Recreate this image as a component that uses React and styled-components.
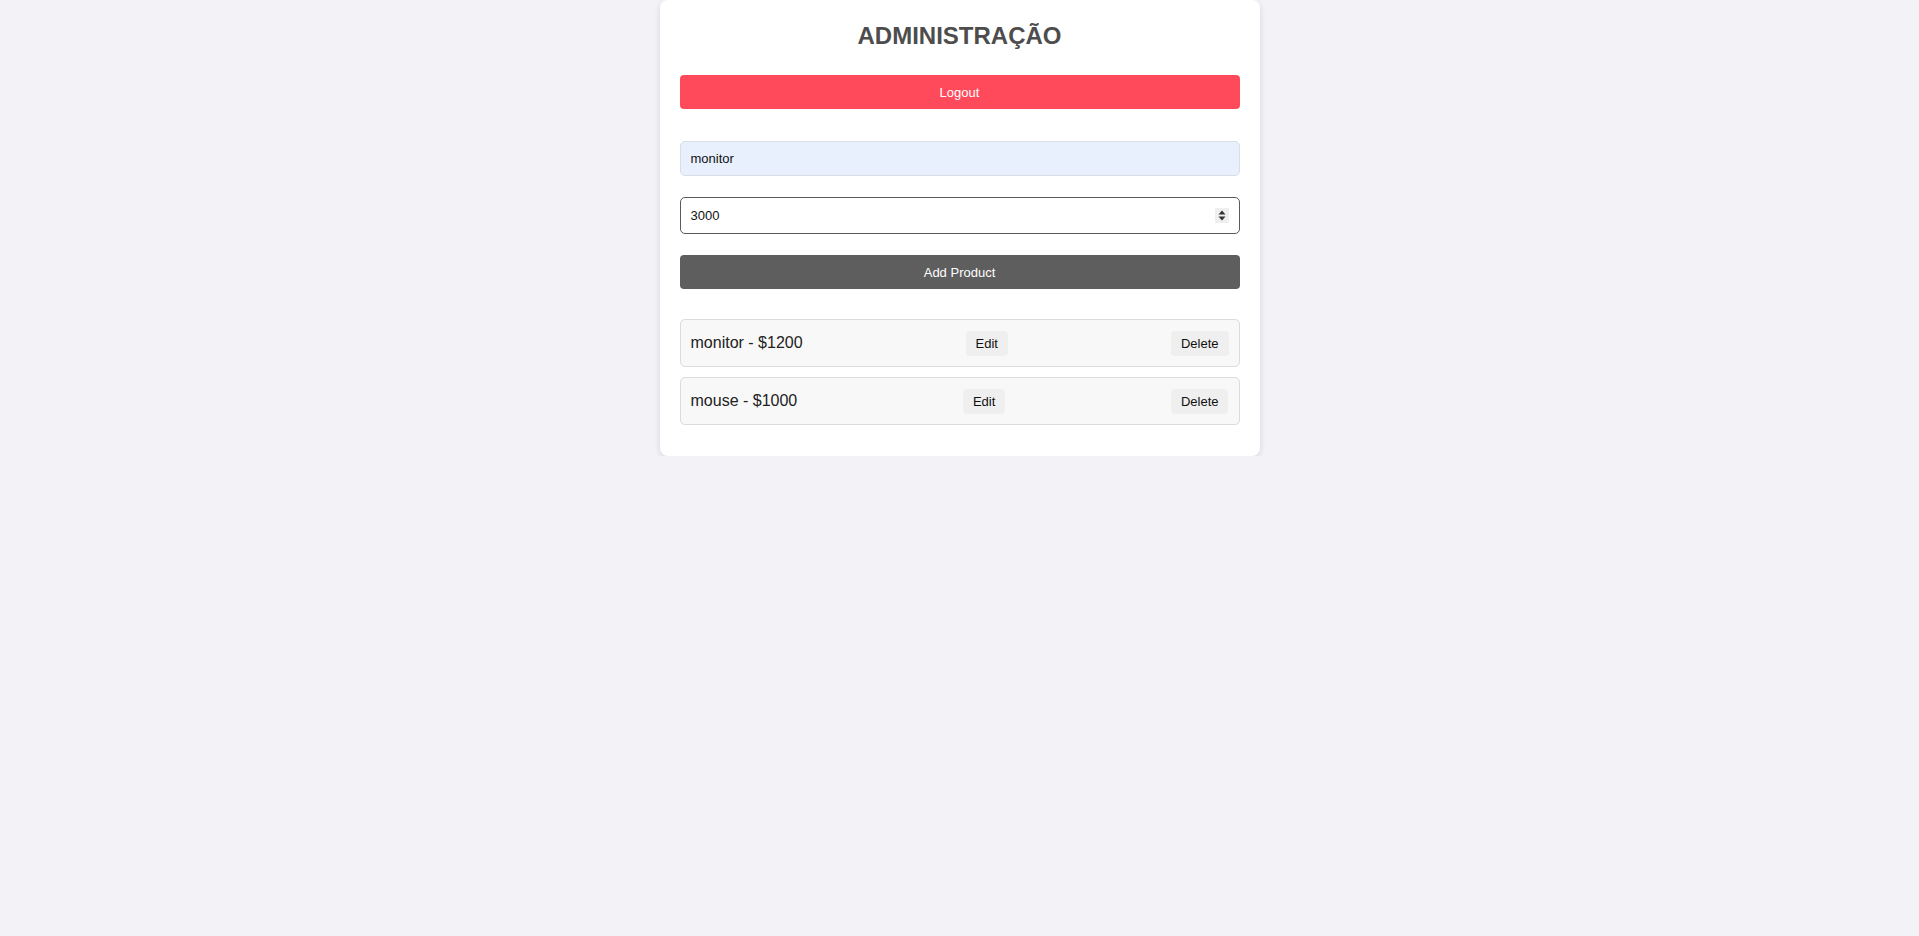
import React, { useState } from "react";
import styled, { createGlobalStyle } from "styled-components";

const GlobalStyle = createGlobalStyle`
  html, body {
    margin: 0;
    padding: 0;
    background: #f3f3f7;
    font-family: "Liberation Sans", Arial, sans-serif;
  }

  * {
    box-sizing: border-box;
  }
`

const Container = styled.div`
  width: 600px;
  margin: 0 auto;
  padding: 20px 20px 19px;
  background: #ffffff;
  border-radius: 8px;
  box-shadow: 0 2px 6px rgba(0, 0, 0, 0.12);
`

const Title = styled.h1`
  margin: 2px 0 25px;
  text-align: center;
  font-size: 24px;
  line-height: 28px;
  font-weight: bold;
  color: #4d4d4d;
`

const Button = styled.button`
  display: block;
  width: 100%;
  height: 34px;
  border: none;
  border-radius: 4px;
  background: ${(props) => props.bg};
  color: #ffffff;
  font-family: "Liberation Sans", Arial, sans-serif;
  font-size: 13px;
  cursor: pointer;
`

const Form = styled.form`
  display: flex;
  flex-direction: column;
  gap: 21px;
  margin-top: 32px;
`

const Field = styled.div`
  position: relative;
`

const Input = styled.input`
  display: block;
  width: 100%;
  height: ${(props) => (props.$focused ? "37px" : "35px")};
  padding: 0 10px;
  border: 1px solid ${(props) => (props.$focused ? "#5a5a5a" : "#d8dde6")};
  border-radius: 5px;
  background: ${(props) => (props.$focused ? "#ffffff" : "#e8f0fe")};
  color: #111;
  font-family: "Liberation Sans", Arial, sans-serif;
  font-size: 13px;
  outline: none;
  -moz-appearance: textfield;

  &::-webkit-inner-spin-button,
  &::-webkit-outer-spin-button {
    -webkit-appearance: none;
    margin: 0;
  }
`

// fake windows-style spinner drawn over the number field
const Spinner = styled.span`
  position: absolute;
  right: 11px;
  top: 11px;
  width: 14px;
  height: 15px;
  background: #efefef;
  display: flex;
  align-items: center;
  justify-content: center;
  pointer-events: none;
`

const List = styled.ul`
  list-style: none;
  margin: 30px 0 12px;
  padding: 0;
  display: flex;
  flex-direction: column;
  gap: 10px;
`

const Item = styled.li`
  display: flex;
  align-items: center;
  justify-content: space-between;
  padding: 10px;
  min-height: 48px;
  background: #f8f8f8;
  border: 1px solid #dcdcdc;
  border-radius: 5px;
  color: #222;
  font-size: 16px;
`

const SmallButton = styled.button`
  height: 25px;
  padding: 0 10px;
  border: none;
  border-radius: 4px;
  background: #efefef;
  color: #111;
  font-family: "Liberation Sans", Arial, sans-serif;
  font-size: 13px;
  cursor: pointer;
`

const App = () => {
  const [name, setName] = useState("monitor")
  const [price, setPrice] = useState("3000")
  const products = [
    { id: 1, name: "monitor", price: 1200 },
    { id: 2, name: "mouse", price: 1000 },
  ]

  return (
    <>
      <GlobalStyle />
      <Container>
        <Title>ADMINISTRAÇÃO</Title>
        <Button bg="#ff4a5c">Logout</Button>

        <Form onSubmit={(e) => e.preventDefault()}>
          <Input value={name} onChange={(e) => setName(e.target.value)} />
          <Field>
            <Input
              type="number"
              $focused
              autoFocus
              value={price}
              onChange={(e) => setPrice(e.target.value)}
            />
            <Spinner>
              <svg width="8" height="11" viewBox="0 0 8 11">
                <path d="M4 0.5 L7.5 4.5 H0.5 Z" fill="#333" />
                <path d="M4 10.5 L7.5 6.5 H0.5 Z" fill="#333" />
              </svg>
            </Spinner>
          </Field>
          <Button bg="#5e5e5e" type="submit">Add Product</Button>
        </Form>

        <List>
          {products.map((p) => (
            <Item key={p.id}>
              <span>{p.name} - ${p.price}</span>
              <SmallButton>Edit</SmallButton>
              <SmallButton>Delete</SmallButton>
            </Item>
          ))}
        </List>
      </Container>
    </>
  )
}

export default App;
